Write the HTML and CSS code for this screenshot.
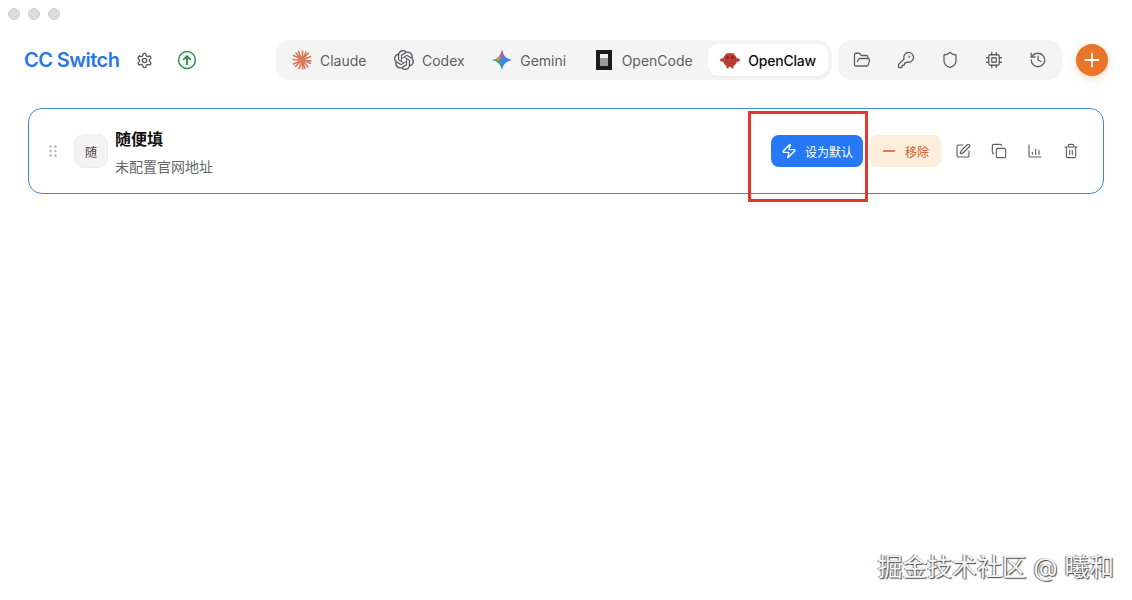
FILE: index.html
```html
<!DOCTYPE html>
<html lang="zh">
<head>
<meta charset="utf-8">
<title>CC Switch</title>
<link rel="stylesheet" href="styles.css">
</head>
<body>
<div class="titlebar"><i class="light"></i><i class="light"></i><i class="light"></i></div>
<header class="header">
  <div class="brand">
    <span class="title">CC Switch</span>
    <svg class="gear" width="17" height="17" viewBox="0 0 24 24" fill="none" stroke="#55555a" stroke-width="1.900" stroke-linecap="round" stroke-linejoin="round"><path d="M12.220 2h-.44a2 2 0 0 0-2 2v.18a2 2 0 0 1-1 1.730l-.43.25a2 2 0 0 1-2 0l-.15-.08a2 2 0 0 0-2.730.73l-.22.38a2 2 0 0 0 .73 2.730l.15.1a2 2 0 0 1 1 1.720v.51a2 2 0 0 1-1 1.740l-.15.09a2 2 0 0 0-.73 2.730l.22.38a2 2 0 0 0 2.730.73l.15-.08a2 2 0 0 1 2 0l.43.25a2 2 0 0 1 1 1.730V20a2 2 0 0 0 2 2h.44a2 2 0 0 0 2-2v-.18a2 2 0 0 1 1-1.730l.43-.25a2 2 0 0 1 2 0l.15.08a2 2 0 0 0 2.730-.73l.22-.39a2 2 0 0 0-.73-2.730l-.15-.08a2 2 0 0 1-1-1.740v-.5a2 2 0 0 1 1-1.740l.15-.09a2 2 0 0 0 .73-2.730l-.22-.38a2 2 0 0 0-2.730-.73l-.15.08a2 2 0 0 1-2 0l-.43-.25a2 2 0 0 1-1-1.730V4a2 2 0 0 0-2-2z"/><circle cx="12" cy="12" r="3"/></svg>
    <svg class="update" width="20" height="20" viewBox="0 0 20 20" fill="none" stroke="#2f9150" stroke-linecap="round" stroke-linejoin="round"><circle cx="10" cy="10" r="8.400" stroke-width="1.500"/><path d="M10 14.200V6.400M6.800 9.400 10 6.200l3.200 3.200" stroke-width="1.900"/></svg>
  </div>
  <nav class="tabs">
    <span class="tab">
      <svg class="tab-icon" viewBox="0 0 20 20" fill="none" stroke="#d97757" stroke-width="1.600" stroke-linecap="round"><path d="M10.500 1v18M1 9.500l18 1.500M4 3l12 14M16.500 3 3.500 16.500M6.500 1.500l6.500 17M1.500 5.500l17 8M14 2 7 18.500M18.500 6.500 1.500 14"/></svg>
      Claude
    </span>
    <span class="tab">
      <svg class="tab-icon" viewBox="0 0 24 24" fill="#55555a"><path d="M22.2819 9.8211a5.9847 5.9847 0 0 0-.5157-4.9108 6.0462 6.0462 0 0 0-6.5098-2.9A6.0651 6.0651 0 0 0 4.9807 4.1818a5.9847 5.9847 0 0 0-3.9977 2.9 6.0462 6.0462 0 0 0 .7427 7.0966 5.98 5.98 0 0 0 .511 4.9107 6.051 6.051 0 0 0 6.5146 2.9001A5.9847 5.9847 0 0 0 13.2599 24a6.0557 6.0557 0 0 0 5.7718-4.2058 5.9894 5.9894 0 0 0 3.9977-2.9001 6.0557 6.0557 0 0 0-.7475-7.0729zm-9.022 12.6081a4.4755 4.4755 0 0 1-2.8764-1.0408l.1419-.0804 4.7783-2.7582a.7948.7948 0 0 0 .3927-.6813v-6.7369l2.02 1.1686a.071.071 0 0 1 .038.052v5.5826a4.504 4.504 0 0 1-4.4945 4.4944zm-9.6607-4.1254a4.4708 4.4708 0 0 1-.5346-3.0137l.142.0852 4.783 2.7582a.7712.7712 0 0 0 .7806 0l5.8428-3.3685v2.3324a.0804.0804 0 0 1-.0332.0615L9.74 19.9502a4.4992 4.4992 0 0 1-6.1408-1.6464zM2.3408 7.8956a4.485 4.485 0 0 1 2.3655-1.9728V11.6a.7664.7664 0 0 0 .3879.6765l5.8144 3.3543-2.0201 1.1685a.0757.0757 0 0 1-.071 0l-4.8303-2.7865A4.504 4.504 0 0 1 2.3408 7.872zm16.5963 3.8558L13.1038 8.364 15.1192 7.2a.0757.0757 0 0 1 .071 0l4.8303 2.7913a4.4944 4.4944 0 0 1-.6765 8.1042v-5.6772a.79.79 0 0 0-.407-.667zm2.0107-3.0231l-.142-.0852-4.7735-2.7818a.7759.7759 0 0 0-.7854 0L9.409 9.2297V6.8974a.0662.0662 0 0 1 .0284-.0615l4.8303-2.7866a4.4992 4.4992 0 0 1 6.6802 4.66zM8.3065 12.863l-2.02-1.1638a.0804.0804 0 0 1-.038-.0567V6.0742a4.4992 4.4992 0 0 1 7.3757-3.4537l-.142.0805L8.704 5.459a.7948.7948 0 0 0-.3927.6813zm1.0976-2.3654l2.602-1.4998 2.6069 1.4998v2.9994l-2.5974 1.4997-2.6067-1.4997Z"/></svg>
      Codex
    </span>
    <span class="tab">
      <svg class="tab-icon" viewBox="0 0 20 20"><path d="M10 0C11.500 6 14 8.500 20 10 14 11.500 11.500 14 10 20 8.500 14 6 11.500 0 10 6 8.500 8.500 6 10 0z" fill="#3b82f0"/><path d="M10 0C8.500 6 6 8.500 0 10H7l3-3z" fill="#e8913a"/><path d="M10 0C9.500 3 8.500 5 7 6.500l3 1.500 1.500-3C10.800 3.500 10.300 1.500 10 0z" fill="#b75f8a"/><path d="M0 10c6 1.500 8.500 4 10 10v-7l-3-3z" fill="#4d9f6a"/></svg>
      Gemini
    </span>
    <span class="tab">
      <svg class="tab-icon" viewBox="0 0 16 20"><rect width="16" height="20" fill="#1c1c1e"/><rect x="4" y="4" width="8" height="12" fill="#f1f1f1"/><rect x="4" y="8" width="8" height="8" fill="#9a9a9a"/></svg>
      OpenCode
    </span>
    <span class="tab tab-active">
      <svg class="tab-icon" viewBox="0 0 20 20" fill="#b93a32"><path d="M6.500 2.800 8 4.200h4l1.500-1.400.4 2.200L10 6 6.100 5z"/><circle cx="10" cy="10" r="7"/><ellipse cx="2.300" cy="10" rx="2.300" ry="1.800"/><ellipse cx="17.700" cy="10" rx="2.300" ry="1.800"/><rect x="6.500" y="15.500" width="2.200" height="3" rx="1"/><rect x="11.300" y="15.500" width="2.200" height="3" rx="1"/><circle cx="7.500" cy="7.500" r="1" fill="#5c1512"/><circle cx="12.500" cy="7.500" r="1" fill="#5c1512"/></svg>
      <span class="tab-label">OpenClaw</span>
    </span>
  </nav>
  <div class="tools">
    <span class="tool"><svg width="18" height="18" viewBox="0 0 24 24" class="line"><path d="m6 14 1.500-2.900A2 2 0 0 1 9.240 10H20a2 2 0 0 1 1.940 2.500l-1.540 6a2 2 0 0 1-1.950 1.500H4a2 2 0 0 1-2-2V5a2 2 0 0 1 2-2h3.900a2 2 0 0 1 1.690.9l.81 1.200a2 2 0 0 0 1.670.9H18a2 2 0 0 1 2 2v2"/></svg></span>
    <span class="tool"><svg width="18" height="18" viewBox="0 0 24 24" class="line"><path d="M2.586 17.414A2 2 0 0 0 2 18.828V21a1 1 0 0 0 1 1h3a1 1 0 0 0 1-1v-1a1 1 0 0 1 1-1h1a1 1 0 0 0 1-1v-1a1 1 0 0 1 1-1h.172a2 2 0 0 0 1.414-.586l.814-.814a6.500 6.500 0 1 0-4-4z"/><circle cx="16.500" cy="7.500" r=".5"/></svg></span>
    <span class="tool"><svg width="18" height="18" viewBox="0 0 24 24" class="line"><path d="M20 13c0 5-3.500 7.500-7.660 8.950a1 1 0 0 1-.67-.01C7.500 20.500 4 18 4 13V6a1 1 0 0 1 1-1c2 0 4.500-1.200 6.240-2.720a1.170 1.170 0 0 1 1.520 0C14.510 3.810 17 5 19 5a1 1 0 0 1 1 1z"/></svg></span>
    <span class="tool"><svg width="18" height="18" viewBox="0 0 24 24" class="line"><rect x="5" y="5" width="14" height="14" rx="2"/><rect x="9" y="9" width="6" height="6" rx="1"/><path d="M15 2v3M15 19v3M2 15h3M2 9h3M19 15h3M19 9h3M9 2v3M9 19v3"/></svg></span>
    <span class="tool"><svg width="18" height="18" viewBox="0 0 24 24" class="line"><path d="M3 12a9 9 0 1 0 9-9 9.750 9.750 0 0 0-6.740 2.740L3 8"/><path d="M3 3v5h5M12 7v5l4 2"/></svg></span>
  </div>
  <button class="add" type="button"><svg width="18" height="18" viewBox="0 0 18 18" fill="none" stroke="#fff" stroke-width="1.800" stroke-linecap="round"><path d="M9 2.500v13M2.500 9h13"/></svg></button>
</header>
<main class="list">
  <section class="card">
    <svg class="grip" width="8" height="12" viewBox="0 0 8 12" fill="#b4b4b8"><circle cx="1.500" cy="1.500" r="1.200"/><circle cx="6.500" cy="1.500" r="1.200"/><circle cx="1.500" cy="6" r="1.200"/><circle cx="6.500" cy="6" r="1.200"/><circle cx="1.500" cy="10.500" r="1.200"/><circle cx="6.500" cy="10.500" r="1.200"/></svg>
    <div class="avatar">随</div>
    <div class="info">
      <div class="name">随便填</div>
      <div class="url">未配置官网地址</div>
    </div>
    <div class="actions">
      <button class="btn btn-primary" type="button"><svg width="16" height="16" viewBox="0 0 24 24" fill="none" stroke="#fff" stroke-width="2" stroke-linejoin="round" stroke-linecap="round"><path d="M4 14a1 1 0 0 1-.78-1.630l9.900-10.200a.5.5 0 0 1 .86.460l-1.920 6.020A1 1 0 0 0 13 10h7a1 1 0 0 1 .78 1.630l-9.900 10.200a.5.500 0 0 1-.86-.460l1.920-6.020A1 1 0 0 0 11 14z"/></svg>设为默认</button>
      <button class="btn btn-remove" type="button"><svg width="16" height="16" viewBox="0 0 16 16" fill="none" stroke="#cf5a1e" stroke-width="1.500" stroke-linecap="round"><path d="M2.500 8h11"/></svg>移除</button>
      <span class="icons">
        <svg width="16" height="16" viewBox="0 0 24 24" class="line"><path d="M12 3H5a2 2 0 0 0-2 2v14a2 2 0 0 0 2 2h14a2 2 0 0 0 2-2v-7"/><path d="M18.375 2.625a1 1 0 0 1 3 3l-9.013 9.014a2 2 0 0 1-.853.505l-2.873.84a.5.500 0 0 1-.62-.62l.84-2.873a2 2 0 0 1 .506-.852z"/></svg>
        <svg width="16" height="16" viewBox="0 0 24 24" class="line"><rect x="8" y="8" width="14" height="14" rx="2"/><path d="M4 16c-1.100 0-2-.9-2-2V4c0-1.100.9-2 2-2h10c1.100 0 2 .9 2 2"/></svg>
        <svg width="16" height="16" viewBox="0 0 24 24" class="line"><path d="M3 3v16a2 2 0 0 0 2 2h16M8 17v-3M13 17V9M18 17v-6"/></svg>
        <svg width="16" height="16" viewBox="0 0 24 24" class="line"><path d="M3 6h18M19 6v14a2 2 0 0 1-2 2H7a2 2 0 0 1-2-2V6M8 6V4a2 2 0 0 1 2-2h4a2 2 0 0 1 2 2v2M10 11v6M14 11v6"/></svg>
      </span>
    </div>
    <div class="callout"></div>
  </section>
</main>
<div class="watermark">掘金技术社区 @ 曦和</div>
</body>
</html>
```
FILE: styles.css
```css
* { box-sizing: border-box; }
html, body { margin: 0; height: 600px; overflow: hidden; background: #fff; }
body { font-family: Inter, "Noto Sans CJK SC", sans-serif; color: #111; position: relative; }
svg { display: block; flex: none; }
.line { fill: none; stroke: #5f5f64; stroke-width: 1.700; stroke-linecap: round; stroke-linejoin: round; }

.titlebar { display: flex; gap: 8px; height: 40px; padding: 8px 0 0 8px; }
.light { width: 12px; height: 12px; border-radius: 50%; background: #dcdcdc; border: 1px solid #cecece; }

.header { display: flex; align-items: center; height: 40px; padding: 0 24px; }
.brand { display: flex; align-items: center; width: 252px; flex: none; }
.title { font-size: 20px; font-weight: 600; color: #2b78e4; width: 95px; white-space: nowrap; letter-spacing: -.55px; }
.gear { margin-left: 17px; }
.update { margin-left: 24px; }

.tabs, .tools { display: flex; align-items: center; height: 40px; background: #f4f4f5; border-radius: 14px; padding: 4px; }
.tabs { gap: 3.500px; width: 556px; }
.tab { display: flex; align-items: center; gap: 8px; height: 32px; padding: 0 12px; border-radius: 10px; font-size: 14px; color: #5f5f64; white-space: nowrap; }
.tab-icon { width: 20px; height: 20px; }
.tab-active { background: #fff; color: #111; font-weight: 500; box-shadow: 0 1px 2px rgba(0,0,0,.05); }
.tab-label { letter-spacing: -.2px; }

.tools { margin-left: 6px; width: 224px; padding: 4px 8px; gap: 12px; }
.tool { display: flex; align-items: center; justify-content: center; width: 32px; height: 32px; }

.add { margin-left: 14px; width: 32px; height: 32px; padding: 0; border: 0; border-radius: 50%; background: #ea7428; display: flex; align-items: center; justify-content: center; box-shadow: 0 3px 8px rgba(237,117,38,.25); }

.list { padding: 28px 28px 0; }
.card { position: relative; display: flex; align-items: center; height: 86px; border: 1px solid #3f8ad8; border-radius: 14px; padding: 0 24px 0 20px; }
.grip { margin-right: 17px; }
.avatar { width: 34px; height: 34px; border-radius: 10px; background: #f3f3f3; border: 1px solid #ececec; font-size: 12px; color: #444; display: flex; align-items: center; justify-content: center; margin-right: 7px; }
.info { flex: 1; padding-top: 3px; }
.name { font-size: 16px; font-weight: 700; line-height: 22px; color: #111; }
.url { font-size: 14px; line-height: 20px; margin-top: 7px; color: #66666b; }

.actions { display: flex; align-items: center; }
.btn { display: flex; align-items: center; height: 32px; border: 0; border-radius: 8px; font-family: inherit; font-size: 12px; padding: 0; }
.btn-primary { width: 92px; background: #2678f6; color: #fff; gap: 8px; padding-left: 10px; }
.btn-remove { width: 72px; margin-left: 6px; background: #fdeedb; color: #cf5a1e; gap: 8px; padding-left: 12px; }
.icons { display: flex; gap: 20px; margin-left: 14px; }

.callout { position: absolute; left: 719px; top: 2px; width: 120px; height: 91px; border: 3px solid #e2372a; }

.watermark { position: absolute; right: 18px; top: 552px; font-size: 24.800px; line-height: 30px; color: #f6f6f6; text-shadow: 1px 1px 1px #444, -1px 0 1px #777; white-space: nowrap; }
```
